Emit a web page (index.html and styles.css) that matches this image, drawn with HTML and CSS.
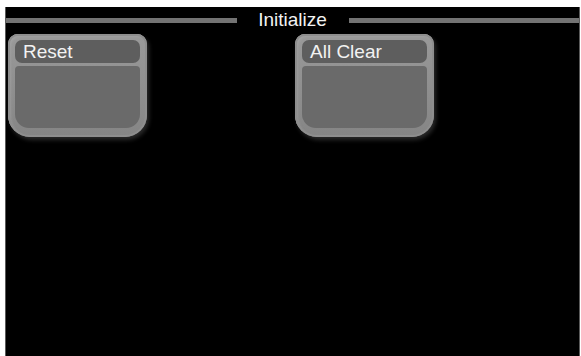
FILE: index.html
```html
<!DOCTYPE html>
<html>
<head>
<title>Initialize</title>
<link rel="stylesheet" href="styles.css">
</head>
<body>
  <div class="marco">
    <div class="cabecera">
      <span class="linea"></span>
      <span class="titulo">Initialize</span>
      <span class="linea"></span>
    </div>
    <div class="teclas">
      <div class="tecla">
        <div class="etiqueta">Reset</div>
        <div class="cara"></div>
      </div>
      <div class="tecla">
        <div class="etiqueta">All Clear</div>
        <div class="cara"></div>
      </div>
    </div>
  </div>
</body>
</html>
```

FILE: styles.css
```css
body {
  margin: 0;
  background-color: #ffffff;
  font-family: 'Liberation Sans', Arial, sans-serif;
  overflow: hidden;
}

.marco {
  margin: 7px 0 0 5px;
  width: 573px;
  height: 349px;
  background-color: #000000;
  border-left: 1px solid #5a5a5a;
  border-right: 1px solid #5a5a5a;
}

.cabecera {
  display: flex;
  align-items: center;
  height: 27px;
}

.linea {
  flex: 1;
  height: 5px;
  background-color: #737373;
}

.titulo {
  width: 112px;
  text-align: center;
  color: #f2f2f2;
  font-size: 19px;
  line-height: 27px;
  position: relative;
  top: -1px;
}

.teclas {
  display: flex;
  gap: 148px;
  padding-left: 2px;
}

.tecla {
  width: 125px;
  height: 88px;
  padding: 6px 7px 9px;
  background: linear-gradient(#9a9a9a, #858585);
  border-radius: 10px 10px 22px 22px;
  box-shadow: inset 0 0 0 2px #8e8e8e, inset 2px 2px 3px #a8a8a8, 2px 3px 4px #2a2a2a;
}

.etiqueta {
  height: 23px;
  line-height: 23px;
  padding-left: 8px;
  background-color: #5e5e5e;
  border-radius: 7px;
  color: #f2f2f2;
  font-size: 19px;
}

.cara {
  margin-top: 3px;
  height: 62px;
  background-color: #6a6a6a;
  border-radius: 4px 4px 14px 14px;
}
```
